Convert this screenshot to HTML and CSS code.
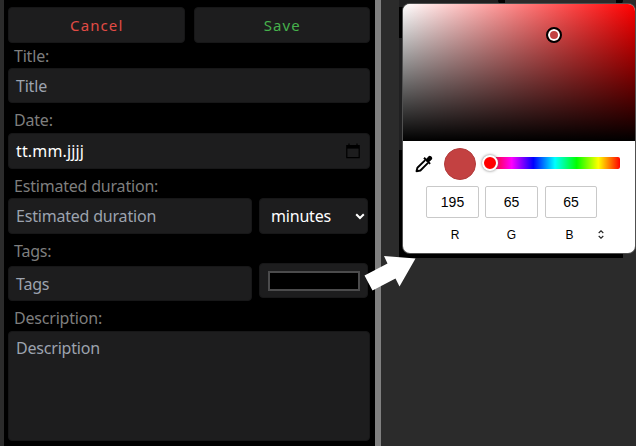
FILE: index.html
```html
<!DOCTYPE html>
<html lang="en">
<head>
<meta charset="utf-8">
<title>Edit entry</title>
<link rel="stylesheet" href="styles.css">
</head>
<body>
<main class="app">
  <form class="editor">
    <div class="row actions">
      <button type="button" class="box button cancel"><span>Cancel</span></button>
      <button type="button" class="box button save"><span>Save</span></button>
    </div>
    <div class="label label-title">Title:</div>
    <div class="box"><span>Title</span></div>
    <div class="label label-date">Date:</div>
    <div class="box date"><span>tt.mm.jjjj</span>
      <svg class="calendar" width="14" height="16" viewBox="0 0 14 16"><path d="M.8 2.5h12.4v12.2H.8zM3 .5v3M11 .5v3" fill="none" stroke="#000" stroke-width="1.2"/><path d="M1 2h12v3.6H1z"/></svg>
    </div>
    <div class="label label-duration">Estimated duration:</div>
    <div class="row split">
      <div class="box"><span>Estimated duration</span></div>
      <div class="box select"><span>minutes</span>
        <svg width="10" height="7" viewBox="0 0 10 7"><path d="M1.2 1.2 5 5l3.8-3.8" fill="none" stroke="#fff" stroke-width="2"/></svg>
      </div>
    </div>
    <div class="label label-tags">Tags:</div>
    <div class="row split tags-row">
      <div class="box tags"><span>Tags</span></div>
      <div class="box color"><div class="swatch"></div></div>
    </div>
    <div class="label label-description">Description:</div>
    <div class="box description"><span>Description</span></div>
  </form>
  <section class="workspace">
    <div class="backdrop"><div class="card-edge"></div></div>
    <div class="picker">
      <div class="spectrum"><div class="handle"></div></div>
      <div class="controls">
        <svg class="dropper" width="18" height="18" viewBox="0 0 18 18"><path d="M10.2 5.1 2.4 12.7 1.5 16.2l3.9-.7 7.6-7.7" fill="none" stroke="#000" stroke-width="1.9" stroke-linejoin="round"/><path d="m8.3 3.4 1.4-1.3 1.7 1.6 2.2-2.4q1.2-1.1 2.4 0l.8.8q1 1.2 0 2.3l-2.4 2.3 1.4 1.5-1.4 1.4z"/></svg>
        <div class="current"></div>
        <div class="hue"><div class="knob"></div></div>
      </div>
      <div class="channels">
        <div class="channel red"><div class="number">195</div><span>R</span></div>
        <div class="channel"><div class="number">65</div><span>G</span></div>
        <div class="channel blue"><div class="number">65</div><span>B</span></div>
        <svg class="spinner" width="6" height="9" viewBox="0 0 6 9"><path d="M.7 3 3 .8 5.3 3M.7 6 3 8.2 5.3 6" fill="none" stroke="#222" stroke-width="1.1"/></svg>
      </div>
    </div>
  </section>
  <svg class="arrow" width="52" height="38" viewBox="0 0 52 38"><path d="M.5 20.5 23.5 8.5 20 1 51.5 3.5 35.5 31.5 31.5 23.5 8.5 35.5z" fill="#fff"/></svg>
</main>
</body>
</html>
```
FILE: styles.css
```css
* { box-sizing: border-box; }
body { margin: 0; background: #2b2b2b; font-family: "Noto Sans", "Open Sans", sans-serif; }
.app { position: relative; display: flex; width: 636px; height: 446px; overflow: hidden; }
.editor {
  width: 377px; margin-left: 4px; padding: 7px 5px 0 4px;
  background: #000; border-right: 6px solid #808080; flex: none;
}
.row { display: flex; }
.box {
  display: flex; align-items: center; width: 362px; height: 35px; padding: 0 7px;
  border: 1px solid #171718; border-radius: 4px; background: #1d1d1e;
  color: #9ca3af; font-size: 16px; line-height: 24px; letter-spacing: -.2px; white-space: nowrap;
}
.box > span { display: block; }
.actions { gap: 9px; }
.button { width: 177px; height: 36px; justify-content: center; font-family: inherit; font-size: 15px; letter-spacing: 1.1px; padding-left: 8px; }
.cancel { color: #e14b45; }
.save { color: #46b14c; }
.label { height: 25px; padding: 1px 0 0 6px; color: #7e7e7e; font-size: 16px; line-height: 24px; letter-spacing: -.2px; }
.label-date { height: 30px; padding-top: 5px; }
.date { height: 36px; color: #fff; justify-content: space-between; letter-spacing: .15px; }
.calendar { margin-right: 2px; }
.label-duration { height: 29px; padding-top: 5px; }
.split { gap: 7px; }
.split .box:first-child { width: 244px; height: 36px; }
.split .box:last-child { width: 109px; }
.split .select { height: 36px; color: #fff; padding: 0 2px 0 11px; justify-content: space-between; }
.label-tags { height: 29px; padding-top: 5px; }
.tags-row { height: 38px; }
.split .box.tags { height: 35px; margin-top: 3px; }
.color { justify-content: center; }
.swatch { width: 92px; height: 20px; border: 2px solid #4b4b4c; background: #000; flex: none; }
.label-description { height: 30px; padding-top: 5px; }
.description { height: 110px; align-items: flex-start; padding-top: 4px; }
.workspace { position: relative; flex: 1; padding: 4px 1px 0 22px; }
.backdrop { position: absolute; left: 18px; top: 0; width: 224px; height: 258px; background: linear-gradient(#202021 0 7px, #000 7px 38px, #202021 38px 150px, #000 150px); }
.card-edge { width: 125px; height: 4px; margin-left: 99px; background: #2b2b2b; border: solid #000; border-width: 0 7px; border-radius: 0 0 4px 4px; }
.picker {
  position: relative; width: 232px; height: 249px; overflow: hidden;
  background: #fff; border-radius: 7px; box-shadow: 0 0 0 1px #505050;
  font-family: "Liberation Sans", Arial, sans-serif; font-size: 14px;
}
.spectrum { position: relative; height: 137px; background: linear-gradient(to top, #000, transparent), linear-gradient(to right, #fff, #f00); }
.handle { position: absolute; left: 143px; top: 23px; width: 16px; height: 16px; border: 2px solid #000; border-radius: 50%; background: #c34141; box-shadow: inset 0 0 0 2px #fff; }
.controls { display: flex; align-items: center; height: 45px; padding-left: 12px; }
.current { width: 32px; height: 32px; margin-left: 11px; border: 1px solid #b23b3b; border-radius: 50%; background: #c34141; }
.hue { display: flex; align-items: center; width: 130px; height: 12px; margin: -2px 0 0 14px; border-radius: 2px; background: linear-gradient(to right, #f00, #f0f, #00f, #0ff, #0f0, #ff0, #f00); }
.knob { width: 16px; height: 16px; margin-left: -8px; border: 2px solid #fff; border-radius: 50%; background: #f00; box-shadow: 0 0 3px #777; flex: none; }
.channels { display: flex; gap: 6px; padding-left: 23px; }
.channel { width: 53px; text-align: center; }
.blue { width: 52px; margin-left: 1px; }
.number { height: 32px; border: 1px solid #c9c9c9; border-radius: 2px; line-height: 31px; }
.channel span { display: block; padding-top: 9px; font-size: 12px; line-height: 16px; }
.red span { padding-left: 5px; }
.blue span { padding-right: 3px; }
.spinner { margin: 44px 0 0 -5px; }
.arrow { position: absolute; left: 364px; top: 255px; }
```
